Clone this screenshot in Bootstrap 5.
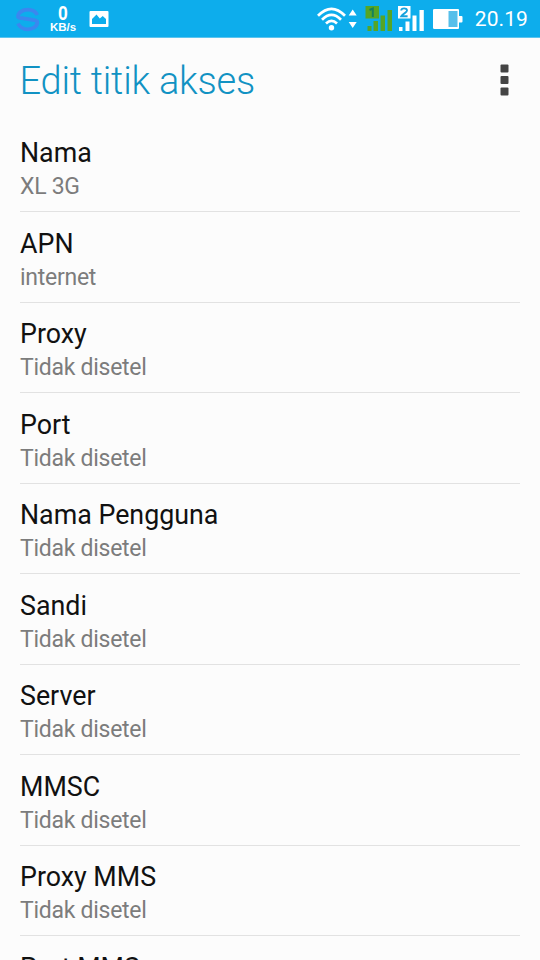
<!DOCTYPE html>
<html lang="id">
<head>
  <meta charset="UTF-8" />
  <title>Edit titik akses</title>
  <meta name="viewport" content="width=device-width, initial-scale=1">
  <!-- Bootstrap 5 CDN -->
  <link href="https://cdn.jsdelivr.net/npm/bootstrap@5.3.3/dist/css/bootstrap.min.css" rel="stylesheet">

  <style>
    body {
      font-family: Roboto, sans-serif;
      background: #fcfcfc;
      height: 100vh;
    }
    .status-bar {
      height: 38px;
      padding-left: 15px;
      padding-right: 12px;
      background: #0dadec;
      border-bottom: 1px solid #5cc4ee;
    }
    .status-bar svg { display: block; flex: none; }
    .net-speed {
      width: 28px;
      margin-left: 8px;
      margin-right: 12px;
      padding-top: 2px;
      font-family: "Liberation Sans", sans-serif;
      font-weight: 700;
    }
    .net-speed .rate { font-size: 20px; line-height: 15px; transform: scaleX(.88); }
    .net-speed .unit { font-size: 11.5px; line-height: 12px; white-space: nowrap; }
    .clock { font-size: 21px; line-height: 38px; margin-left: 12px; padding-top: 1px; letter-spacing: .1px; }
    .title-bar { height: 83.5px; padding: 0 20px; }
    .title-bar h1 { font-size: 38px; font-weight: 300; line-height: 44px; letter-spacing: -.22px; color: #1192c3; margin-top: 3px; margin-left: -.5px; }
    .menu-btn { padding: 1px 11.5px 0; }
    .apn-item {
      height: 90.5px;
      margin: 0 20px;
      padding: 15.5px 0 0;
      background: transparent;
      border-color: #e2e2e2;
    }
    .apn-name { font-size: 26.8px; line-height: 32px; color: #111; }
    .apn-value { font-size: 23px; line-height: 35px; letter-spacing: -.27px; color: #7c7c7c; }
  </style>
</head>
<body class="overflow-hidden">

<div class="status-bar d-flex align-items-center text-white">
  <!-- S logo -->
  <svg width="26" height="38" viewBox="0 0 26 38" fill="none" stroke="#3b87ef" stroke-width="3.8">
    <path d="M22.300 15C20.500 11.500 17 9.700 12.700 9.700C7.500 9.700 3.200 12.500 3 16.500C3 17.700 4.500 18 7 18.200L17.500 19.900C21 20.300 22.400 20.800 22.300 22.300C22 26.800 17.500 29.300 12.700 29.300C8.300 29.300 4.800 27.200 3 23.500"/>
  </svg>
  <div class="net-speed text-center">
    <div class="rate">0</div>
    <div class="unit">KB/s</div>
  </div>
  <!-- picture -->
  <svg width="20" height="38" viewBox="0 0 20 38">
    <path fill="#fff" fill-rule="evenodd" d="M1.500 11H18.500Q19.500 11 19.500 12V26Q19.500 27 18.500 27H1.500Q.5 27 .5 26V12Q.5 11 1.500 11ZM3 24H17V19L13.700 16L10.800 18.500L7.500 14.500L3 19Z"/>
  </svg>

  <div class="d-flex align-items-center ms-auto">
    <!-- wifi with traffic arrows -->
    <svg width="40" height="38" viewBox="317 0 40 38" fill="none" stroke="#fff" stroke-width="2.700">
      <path d="M318 15.800Q331.500 1.800 345 15.800M322 19.700Q331.500 10.200 341 19.700M326 23.500Q331.500 18.200 337 23.500"/>
      <circle cx="331.500" cy="27.800" r="2.700" fill="#fff" stroke="none"/>
      <path fill="#fff" stroke="none" d="M348.700 15.500L352.700 9.500L356.700 15.500ZM348.700 22L352.700 28L356.700 22Z"/>
    </svg>
    <!-- SIM 1 -->
    <svg class="ms-2" width="28" height="38" viewBox="365 0 28 38" fill="#55a526">
      <path d="M365.500 6H379V18.500H365.500ZM367.500 26H371.500V31H367.500ZM373.500 21H378V31H373.500ZM380.500 15.500H385V31H380.500ZM387.500 10H392V31H387.500Z"/>
      <path fill="none" stroke="#14815c" stroke-width="2" d="M369.500 10L372.800 8.500V17"/>
    </svg>
    <!-- SIM 2 -->
    <svg width="33" height="38" viewBox="393 0 33 38" fill="#fff">
      <path d="M398 6H410.500V18.500H398ZM399 27H402.500V31H399ZM405.500 21.500H409.500V31H405.500ZM412.500 15.500H416.500V31H412.500ZM419.500 10H423.800V31H419.500Z"/>
      <path fill="none" stroke="#16a2dc" stroke-width="1.900" d="M401.200 10.500C401.400 7.700 407 7.600 407 10.500C407 12.800 402.700 13.500 401.300 16.200H407.600"/>
    </svg>
    <!-- battery -->
    <svg class="ms-1" width="33" height="38" viewBox="430 0 33 38">
      <path fill="#fff" d="M434.500 9H458Q459 9 459 10V16H461.500Q462.500 16 462.500 17V21.500Q462.500 22.500 461.500 22.500H459V28Q459 29 458 29H434.500Q433 29 433 28V10Q433 9 434.500 9Z"/>
      <path fill="#56bfea" d="M448.500 11H457.500V27H448.500Z"/>
    </svg>
    <div class="clock">20.19</div>
  </div>
</div>

<div class="title-bar d-flex justify-content-between align-items-center">
  <h1 class="mb-0">Edit titik akses</h1>
  <button type="button" class="btn border-0 menu-btn" aria-label="Menu">
    <svg class="d-block" width="9" height="32" viewBox="0 0 9 32" fill="#444">
      <rect x=".5" y=".5" width="8" height="8" rx="1"/>
      <rect x=".5" y="12" width="8" height="8" rx="1"/>
      <rect x=".5" y="23.500" width="8" height="8" rx="1"/>
    </svg>
  </button>
</div>

<div class="list-group list-group-flush" id="apnList"></div>

<script src="https://cdn.jsdelivr.net/npm/bootstrap@5.3.3/dist/js/bootstrap.bundle.min.js"></script>
<script>
  const settings = [
    ["Nama", "XL 3G"],
    ["APN", "internet"],
    ["Proxy", "Tidak disetel"],
    ["Port", "Tidak disetel"],
    ["Nama Pengguna", "Tidak disetel"],
    ["Sandi", "Tidak disetel"],
    ["Server", "Tidak disetel"],
    ["MMSC", "Tidak disetel"],
    ["Proxy MMS", "Tidak disetel"],
    ["Port MMS", "Tidak disetel"]
  ];

  const apnList = document.getElementById("apnList");
  settings.forEach(([name, value]) => {
    const item = document.createElement("div");
    item.className = "list-group-item apn-item";
    item.innerHTML = `<div class="apn-name">${name}</div><div class="apn-value">${value}</div>`;
    apnList.appendChild(item);
  });
</script>

</body>
</html>
